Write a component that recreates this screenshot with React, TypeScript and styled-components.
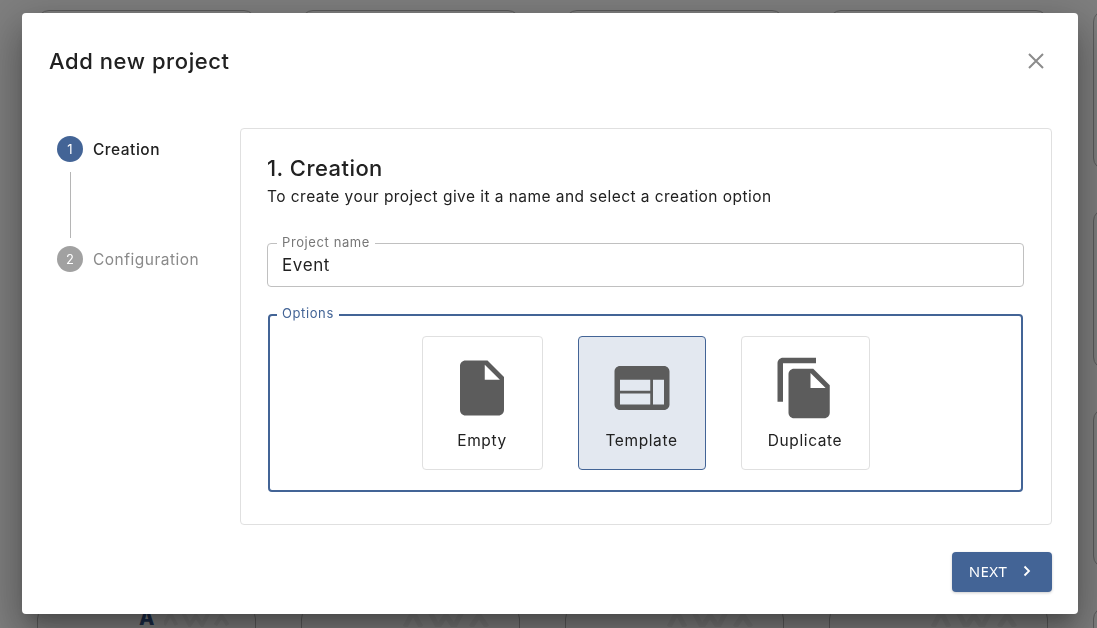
import { createGlobalStyle, styled } from "styled-components";

const GlobalStyle = createGlobalStyle`
  html, body {
    margin: 0;
    height: 100%;
    overflow: hidden;
    background: #fff;
    font-family: "Inter", "Noto Sans", sans-serif;
  }
`;

const Page = styled.div`
  width: 100vw;
  height: 100vh;
  overflow: hidden;
`;

const Grid = styled.div`
  display: grid;
  grid-template-columns: repeat(5, 219px);
  grid-auto-rows: 160px;
  column-gap: 45px;
  row-gap: 39px;
  padding: 10px 0 0 37px;
`;

const GhostCard = styled.div<{ $inset: number }>`
  box-sizing: border-box;
  border: 1px solid #b9b9b9;
  border-radius: 12px;
  display: flex;
  align-items: flex-start;
  gap: 10px;
  padding: 2px 0 0 ${(p) => p.$inset}px;
`;

const GhostLetter = styled.span`
  font-size: 20px;
  line-height: 17px;
  font-weight: 800;
  color: #37578f;
`;

const GhostMark = styled.svg`
  flex: none;
  fill: none;
  stroke: #f1f1f1;
  stroke-width: 5;
`;

const Backdrop = styled.div`
  position: fixed;
  inset: 0;
  background: rgba(0, 0, 0, 0.5);
  display: flex;
  align-items: flex-start;
  justify-content: center;
  padding: 13px 0 0 3px;
`;

const Modal = styled.div`
  box-sizing: border-box;
  width: 1056px;
  height: 601px;
  background: #fff;
  border-radius: 4px;
  box-shadow: 0 11px 15px -7px rgba(0, 0, 0, 0.2), 0 24px 38px 3px rgba(0, 0, 0, 0.2),
    0 9px 46px 8px rgba(0, 0, 0, 0.18);
  padding: 34px 26px 22px 27px;
  display: flex;
  flex-direction: column;
`;

const Header = styled.div`
  display: flex;
  justify-content: space-between;
  align-items: center;
  height: 28px;
  margin-bottom: 53px;
`;

const Title = styled.h2`
  margin: 0;
  font-size: 22px;
  font-weight: 500;
  color: #212121;
  letter-spacing: 0.57px;
`;

const CloseButton = styled.button`
  border: 0;
  background: none;
  padding: 0;
  margin-right: 7px;
  width: 18px;
  height: 18px;
  display: flex;
`;

const Body = styled.div`
  display: flex;
  flex: 1;
`;

const Stepper = styled.div`
  width: 191px;
  flex: none;
  padding: 8px 0 0 8px;
  box-sizing: border-box;
`;

const Step = styled.div`
  display: flex;
  align-items: center;
  gap: 10px;
  height: 26px;
`;

const StepCircle = styled.span<{ $active?: boolean }>`
  width: 26px;
  height: 26px;
  border-radius: 50%;
  background: ${(p) => (p.$active ? "#436496" : "#a1a1a1")};
  color: #fff;
  font-size: 13px;
  display: flex;
  align-items: center;
  justify-content: center;
`;

const StepLabel = styled.span<{ $active?: boolean }>`
  font-size: 15.5px;
  letter-spacing: 0.5px;
  font-weight: ${(p) => (p.$active ? 500 : 400)};
  color: ${(p) => (p.$active ? "#212121" : "#8a8a8a")};
`;

const StepLine = styled.div`
  width: 1px;
  height: 66px;
  margin: 10px 0 8px 13px;
  background: #b5b5b5;
`;

const Content = styled.div`
  flex: 1;
  display: flex;
  flex-direction: column;
`;

const Panel = styled.div`
  box-sizing: border-box;
  height: 397px;
  border: 1px solid #e0e0e0;
  border-radius: 4px;
  padding: 25px 27px 32px 26px;
  display: flex;
  flex-direction: column;
`;

const PanelTitle = styled.h3`
  margin: 0;
  font-size: 22px;
  line-height: 28px;
  font-weight: 500;
  letter-spacing: 0.45px;
  color: #212121;
`;

const PanelText = styled.p`
  margin: 4px 0 0;
  font-size: 15.5px;
  line-height: 22px;
  letter-spacing: 0.45px;
  color: #212121;
`;

const NameField = styled.fieldset`
  box-sizing: border-box;
  margin: 26px 0 0;
  padding: 0 14px;
  height: 53px;
  border: 1px solid #c0c0c0;
  border-radius: 4px;
`;

const FieldLegend = styled.legend<{ $active?: boolean }>`
  padding: 0 5px ${(p) => (p.$active ? "4px" : "2px")};
  margin-left: ${(p) => (p.$active ? "7px" : "-5px")};
  font-size: 13px;
  line-height: 16px;
  letter-spacing: 0.6px;
  color: ${(p) => (p.$active ? "#436496" : "#777")};
`;

const NameValue = styled.div`
  font-size: 17px;
  line-height: 24px;
  letter-spacing: 0.6px;
  margin-top: 1px;
  color: #212121;
`;

const OptionsField = styled.fieldset`
  box-sizing: border-box;
  margin: 18px 1px 0;
  padding: 11px 0 0;
  height: 187px;
  min-width: 0;
  border: 2px solid #436496;
  border-radius: 4px;
  display: flex;
  justify-content: center;
`;

const OptionRow = styled.div`
  display: flex;
  gap: 35px;
  width: 100%;
  justify-content: center;
`;

const Option = styled.div<{ $selected?: boolean; $width: number }>`
  box-sizing: border-box;
  width: ${(p) => p.$width}px;
  height: 134px;
  border: 1px solid ${(p) => (p.$selected ? "#436496" : "#e0e0e0")};
  border-radius: 4px;
  background: ${(p) => (p.$selected ? "#e3e8f0" : "#fff")};
  display: flex;
  flex-direction: column;
  align-items: center;
  padding-top: 18px;
`;

const OptionIcon = styled.svg`
  width: 66px;
  height: 66px;
  flex: none;
  fill: #5c5c5c;
`;

const OptionLabel = styled.span`
  margin-top: 9px;
  font-size: 15.5px;
  line-height: 22px;
  letter-spacing: 0.6px;
  color: #212121;
`;

const Footer = styled.div`
  display: flex;
  justify-content: flex-end;
  margin-top: 27px;
`;

const NextButton = styled.button`
  box-sizing: border-box;
  width: 100px;
  height: 40px;
  border: 0;
  border-radius: 4px;
  padding: 0 2px 3px 0;
  background: #436496;
  color: #fff;
  font-family: "Noto Sans", sans-serif;
  font-size: 15px;
  letter-spacing: 0.4px;
  display: flex;
  align-items: center;
  justify-content: center;
  gap: 14px;
  box-shadow: 0 1px 3px rgba(0, 0, 0, 0.2);
`;

const ghostCards = Array.from({ length: 20 }, (_, i) => i);

export default function App() {
  return (
    <Page>
      <GlobalStyle />
      <Grid>
        {ghostCards.map((i) => (
          <GhostCard key={i} $inset={i === 15 ? 101 : 98}>
            {i === 15 && <GhostLetter>A</GhostLetter>}
            {i >= 15 && i < 19 && (
              <GhostMark viewBox="0 0 90 17" width={i === 15 ? 70 : 100} height="17">
                <path d="M0 17 L8 2 L16 17 M25 2 L33 17 L41 5 L49 17 L57 2 M66 17 L74 5 L82 17" />
              </GhostMark>
            )}
          </GhostCard>
        ))}
      </Grid>
      <Backdrop>
        <Modal>
          <Header>
            <Title>Add new project</Title>
            <CloseButton aria-label="Close">
              <svg viewBox="0 0 18 18" width="18" height="18">
                <path d="M2 2 L16 16 M16 2 L2 16" stroke="#8c8c8c" strokeWidth="2" fill="none" />
              </svg>
            </CloseButton>
          </Header>
          <Body>
            <Stepper>
              <Step>
                <StepCircle $active>1</StepCircle>
                <StepLabel $active>Creation</StepLabel>
              </Step>
              <StepLine />
              <Step>
                <StepCircle>2</StepCircle>
                <StepLabel>Configuration</StepLabel>
              </Step>
            </Stepper>
            <Content>
              <Panel>
                <PanelTitle>1. Creation</PanelTitle>
                <PanelText>To create your project give it a name and select a creation option</PanelText>
                <NameField>
                  <FieldLegend>Project name</FieldLegend>
                  <NameValue>Event</NameValue>
                </NameField>
                <OptionsField>
                  <FieldLegend $active>Options</FieldLegend>
                  <OptionRow>
                    <Option $width={121}>
                      <OptionIcon viewBox="0 0 24 24">
                        <path d="M6 2c-1.1 0-2 .9-2 2v16c0 1.1.9 2 2 2h12c1.1 0 2-.9 2-2V8l-6-6H6zm7 7V3.5L18.5 9H13z" />
                      </OptionIcon>
                      <OptionLabel>Empty</OptionLabel>
                    </Option>
                    <Option $width={128} $selected>
                      <OptionIcon viewBox="0 0 24 24">
                        <path d="M20 4H4c-1.1 0-2 .9-2 2v12c0 1.1.9 2 2 2h16c1.1 0 2-.9 2-2V6c0-1.1-.9-2-2-2zM15 18H4v-4h11v4zm0-5H4V9h11v4zm5 5h-4V9h4v9z" />
                      </OptionIcon>
                      <OptionLabel>Template</OptionLabel>
                    </Option>
                    <Option $width={129}>
                      <OptionIcon viewBox="0 0 24 24">
                        <path d="M16 1H4c-1.1 0-2 .9-2 2v14h2V3h12V1zm-1 4H8c-1.1 0-2 .9-2 2v14c0 1.1.9 2 2 2h11c1.1 0 2-.9 2-2V11l-6-6zm-1 7V6.5l5.5 5.5H14z" />
                      </OptionIcon>
                      <OptionLabel>Duplicate</OptionLabel>
                    </Option>
                  </OptionRow>
                </OptionsField>
              </Panel>
              <Footer>
                <NextButton>
                  NEXT
                  <svg viewBox="0 0 12 12" width="12" height="12">
                    <path d="M3.5 1.5 L8 6 L3.5 10.5" stroke="#fff" strokeWidth="1.8" fill="none" />
                  </svg>
                </NextButton>
              </Footer>
            </Content>
          </Body>
        </Modal>
      </Backdrop>
    </Page>
  );
}
